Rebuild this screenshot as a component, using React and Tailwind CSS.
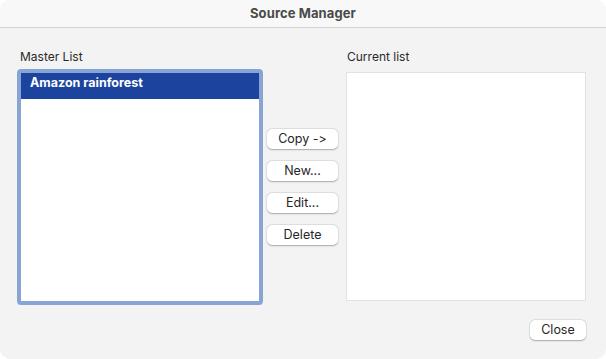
import React from "react";

function Btn({ children, className = "" }) {
  return (
    <div
      className={
        "flex items-center justify-center rounded-[5px] bg-white text-[12.5px] text-[#262626] shadow-[0_0.5px_1.5px_rgba(0,0,0,0.28),0_0_0_0.5px_rgba(0,0,0,0.08)] " +
        className
      }
    >
      {children}
    </div>
  );
}

export default function App() {
  return (
    <div
      className="w-[606px] h-[359px] bg-white [font-feature-settings:'calt'_0,'liga'_0]"
      style={{ fontFamily: '"Inter", "Liberation Sans", sans-serif' }}
    >
      <div className="w-full h-full rounded-[10px] overflow-hidden bg-[#f3f3f3] flex flex-col">
        <div className="h-[28px] shrink-0 bg-[#f8f8f8] border-b border-[#d4d4d4] flex items-center justify-center">
          <span className="text-[13px] font-bold text-[#4a4a4a] tracking-[0.1px]">Source Manager</span>
        </div>
        <div className="flex-1 flex flex-col">
          <div className="flex pt-[19px]">
            <div className="ml-[17px] w-[246px] flex flex-col">
              <div className="pl-[3px] pt-[2px] text-[12px] leading-[16px] text-[#2a2a2a] h-[22px]">Master List</div>
              <div className="h-[236px] rounded-[4px] border-[4px] border-[#88a4d4] bg-white">
                <div className="h-[26px] bg-[#1c449f] flex items-start pt-[1px] pl-[9px] text-[12.5px] font-bold text-white">
                  Amazon rainforest
                </div>
              </div>
            </div>
            <div className="ml-[4px] w-[71px] flex flex-col gap-[12px] pt-[82px]">
              <Btn className="h-[20px]">Copy -&gt;</Btn>
              <Btn className="h-[20px]">New...</Btn>
              <Btn className="h-[20px]">Edit...</Btn>
              <Btn className="h-[20px]">Delete</Btn>
            </div>
            <div className="ml-[8px] w-[240px] flex flex-col">
              <div className="pl-[1px] pt-[2px] text-[12px] leading-[16px] text-[#2a2a2a] h-[25px]">Current list</div>
              <div className="h-[229px] bg-white border border-[#e2e2e2]"></div>
            </div>
          </div>
          <div className="flex justify-end pr-[20px] pt-[15px]">
            <Btn className="w-[56px] h-[20px]">Close</Btn>
          </div>
        </div>
      </div>
    </div>
  );
}
